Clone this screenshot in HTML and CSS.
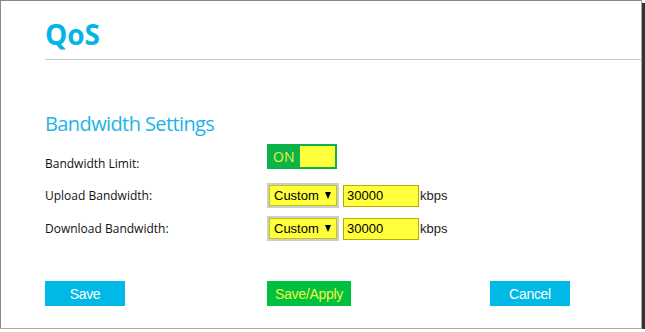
FILE: index.html
```html
<!DOCTYPE html>
<html>
<head>
    <meta charset="UTF-8">
    <title>QoS</title>
    <link rel="stylesheet" href="styles.css">
</head>
<body>
    <div class="window">
        <div class="page-head">
            <h1 class="page-title">QoS</h1>
        </div>

        <!-- Bandwidth -->
        <div class="section">
            <h2 class="section-title">Bandwidth Settings</h2>

            <div class="form-row row-limit">
                <label class="field-label">Bandwidth Limit:</label>
                <div class="toggle">
                    <span class="toggle-text">ON</span>
                    <span class="toggle-knob"></span>
                </div>
            </div>

            <div class="form-row row-upload">
                <label class="field-label">Upload Bandwidth:</label>
                <div class="select">Custom<span class="caret"></span></div>
                <input class="rate" type="text" value="30000"><span class="unit">kbps</span>
            </div>

            <div class="form-row row-download">
                <label class="field-label">Download Bandwidth:</label>
                <div class="select">Custom<span class="caret"></span></div>
                <input class="rate" type="text" value="30000"><span class="unit">kbps</span>
            </div>
        </div>

        <!-- Actions -->
        <div class="actions">
            <button class="btn btn-blue">Save</button>
            <button class="btn btn-green">Save/Apply</button>
            <button class="btn btn-blue">Cancel</button>
        </div>
    </div>
</body>
</html>
```

FILE: styles.css
```css
body {
    margin: 0;
    background: #fff;
    font-family: "Open Sans", sans-serif;
}
.window {
    width: 640px;
    height: 327px;
    border: 1px solid;
    border-color: #8a8a8a #a9a9a9 #a9a9a9 #8a8a8a;
    box-shadow: 3px 3px 0 #353535;
}
.page-head {
    margin-left: 44px;
    padding-top: 19px;
    padding-bottom: 11px;
    border-bottom: 1px solid #c6cdd3;
}
.page-title {
    margin: 0;
    font-size: 28px;
    line-height: 28px;
    font-weight: 700;
    color: #00b6e8;
}
.section {
    padding-left: 44px;
}
.section-title {
    margin: 52px 0 8px;
    font-size: 20px;
    line-height: 24px;
    font-weight: 400;
    letter-spacing: -0.6px;
    color: #1cb4e8;
}
.form-row {
    display: flex;
    align-items: center;
    height: 25px;
}
.row-limit {
    align-items: flex-start;
}
.row-upload {
    margin-top: 14px;
}
.row-download {
    margin-top: 8px;
}
.field-label {
    width: 222px;
    font-size: 12px;
    line-height: 16px;
    color: #111;
}
.row-limit .field-label {
    padding-top: 12px;
}
.toggle {
    display: flex;
    justify-content: space-between;
    align-items: center;
    width: 70px;
    height: 25px;
    padding: 2px;
    box-sizing: border-box;
    background: #0cb34a;
}
.toggle-text {
    padding-left: 4px;
    font-size: 14px;
    color: #eef23e;
}
.toggle-knob {
    width: 35px;
    height: 21px;
    background: #ffff3c;
}
.select {
    display: flex;
    align-items: center;
    width: 72px;
    height: 25px;
    box-sizing: border-box;
    padding-left: 5px;
    border: 2px solid #c9cfd5;
    box-shadow: inset 0 0 0 1px #c6c600;
    background: #ffff3c;
    font-family: "Liberation Sans", Arial, sans-serif;
    font-size: 13px;
    color: #000;
}
.caret {
    margin-left: 6px;
    border-left: 3px solid transparent;
    border-right: 3px solid transparent;
    border-top: 7px solid #000;
}
.rate {
    width: 76px;
    height: 22px;
    margin-left: 4px;
    padding: 0 3px;
    box-sizing: border-box;
    border: 1px solid #b3ad00;
    background: #ffff3c;
    font-family: "Liberation Sans", Arial, sans-serif;
    font-size: 13px;
    color: #000;
    outline: none;
}
.unit {
    margin-left: 1px;
    font-family: "Liberation Sans", Arial, sans-serif;
    font-size: 13px;
    color: #222;
}
.actions {
    display: grid;
    grid-template-columns: 222px 223px 80px;
    margin-top: 40px;
    padding-left: 44px;
}
.btn {
    height: 25px;
    padding: 0;
    border: none;
    font-family: "Liberation Sans", Arial, sans-serif;
    font-size: 14px;
    letter-spacing: -0.3px;
    cursor: pointer;
}
.btn-blue {
    width: 80px;
    background: #00b9e7;
    color: #fff;
}
.btn-green {
    width: 84px;
    background: #00c040;
    color: #f4f43c;
}
```
